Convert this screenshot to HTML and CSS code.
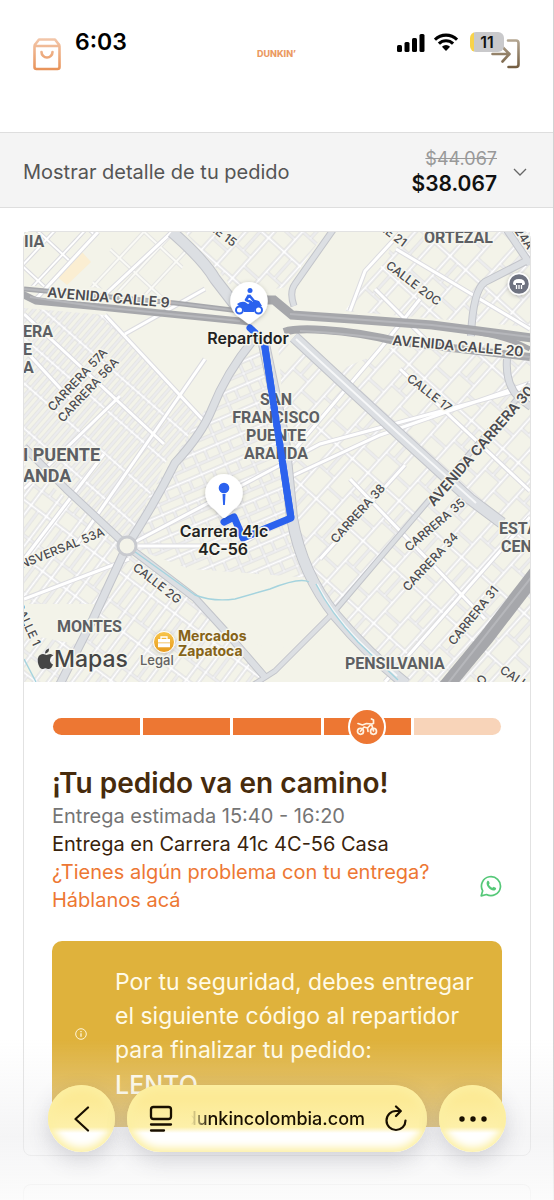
FILE: index.html
```html
<!DOCTYPE html>
<html lang="es">
<head>
<meta charset="utf-8">
<meta name="viewport" content="width=device-width, initial-scale=1">
<title>Dunkin' Colombia</title>
<link rel="stylesheet" href="styles.css">
</head>
<body>
<div class="status">
  <span class="status-time">6:03</span>
  <span class="status-icons">
    <svg width="28" height="19" viewBox="0 0 28 19" aria-hidden="true"><rect x="0" y="12" width="5" height="7" rx="1.5"/><rect x="7.500" y="9" width="5" height="10" rx="1.5"/><rect x="15" y="5" width="5" height="14" rx="1.5"/><rect x="22.500" y="1" width="5" height="18" rx="1.5"/></svg>
    <svg width="24" height="19" viewBox="0 0 26 19" aria-hidden="true"><path d="M1 6.500a17 17 0 0 1 24 0M5.300 10.800a11 11 0 0 1 15.400 0" fill="none" stroke="#000" stroke-width="3.400"/><path d="M8.600 14a6.500 6.500 0 0 1 8.800 0L13 18.600z"/></svg>
    <span class="battery">11</span>
  </span>
</div>

<div class="page">
  <header class="header">
    <button class="icon-button" aria-label="Bolsa"><svg width="30" height="34" viewBox="0 0 30 34" fill="none" stroke="url(#bag)" stroke-width="2.600" stroke-linejoin="round" stroke-linecap="round"><defs><linearGradient id="bag" x1="0" y1="0" x2="0" y2="34" gradientUnits="userSpaceOnUse"><stop stop-color="#f3c9ae"/><stop offset="1" stop-color="#e89156"/></linearGradient></defs><path d="M2.500 9.500Q2.500 8 3.500 7L7 2.500h16L26.500 7q1 1 1 2.500V30a2 2 0 0 1-2 2h-21a2 2 0 0 1-2-2zM3 9h24M9.500 15a5.500 5.500 0 0 0 11 0"/></svg></button>
    <a class="brand" href="#">DUNKIN’</a>
    <button class="icon-button" aria-label="Ingresar"><svg width="38" height="32" viewBox="0 0 38 32" fill="none" stroke="url(#door)" stroke-width="2.600" stroke-linecap="round" stroke-linejoin="round"><defs><linearGradient id="door" x1="0" y1="0" x2="0" y2="32" gradientUnits="userSpaceOnUse"><stop stop-color="#b9ac98"/><stop offset="1" stop-color="#6e573a"/></linearGradient></defs><path d="M25 2.500h8a2.500 2.500 0 0 1 2.500 2.500v21.500a2.500 2.500 0 0 1-2.500 2.500h-7.500M9.500 16H26M19.500 9l7 7-7 7.500"/></svg></button>
  </header>

  <button class="summary">
    <span class="summary-label">Mostrar detalle de tu pedido</span>
    <span class="summary-price"><s>$44.067</s><strong>$38.067</strong></span>
    <svg class="chevron" width="14" height="8" viewBox="0 0 14 8" fill="none" stroke="#666" stroke-width="1.300"><path d="m1 1 6 6 6-6"/></svg>
  </button>

  <main class="main">
    <section class="card">
      <svg class="map" viewBox="24 233 506 450" preserveAspectRatio="xMidYMid slice" role="img" aria-label="Mapa del recorrido">
        <defs>
          <pattern id="p-large" width="22" height="36" patternUnits="userSpaceOnUse" patternTransform="rotate(43)"><rect width="22" height="36" fill="#fff"/><rect class="block" x="1.500" y="1.500" width="19" height="33"/></pattern>
          <pattern id="p-narrow" width="34" height="21" patternUnits="userSpaceOnUse" patternTransform="translate(3 5) rotate(-49)"><rect width="34" height="21" fill="#fff"/><rect class="block" x="1" y="1" width="31" height="5"/><rect class="block" x="1" y="8" width="31" height="5"/><rect class="block" x="1" y="15" width="31" height="5"/></pattern>
          <pattern id="p-mid" width="26" height="22" patternUnits="userSpaceOnUse" patternTransform="rotate(-23)"><rect width="26" height="22" fill="#fff"/><rect class="block" x="1" y="1" width="24" height="8"/><rect class="block" x="1" y="12" width="10" height="9"/><rect class="block" x="13" y="12" width="12" height="9"/></pattern>
          <pattern id="p-south" width="46" height="30" patternUnits="userSpaceOnUse" patternTransform="rotate(-53)"><rect width="46" height="30" fill="#fff"/><rect class="block" x="1" y="1" width="26" height="7"/><rect class="block" x="1" y="10" width="26" height="7"/><rect class="block" x="1" y="20" width="26" height="8"/><rect class="block" x="30" y="1" width="15" height="16"/><rect class="block" x="30" y="20" width="15" height="8"/></pattern>
          <pattern id="p-east" width="54" height="42" patternUnits="userSpaceOnUse" patternTransform="translate(4 0) rotate(-48)"><rect width="54" height="42" fill="#fff"/><rect class="block" x="1" y="1" width="25" height="18"/><rect class="block" x="28" y="1" width="24" height="8"/><rect class="block" x="28" y="11" width="24" height="8"/><rect class="block" x="1" y="22" width="14" height="18"/><rect class="block" x="17" y="22" width="35" height="18"/></pattern>
          <path id="streets" d="m24 315 140 130M105 316 204 422M98 233 36 300M205 360 75 548M24 490 120 397M24 560l80-105M24 600l105-40M127 547l110 0 55-30M127 547 320 445 530 388M295 450l85-100 40-50M290 478l90-42 150-52M350 312l15-40 35-38M396 250l134 80M375 290l60 60M385 683l145-165M320 560l85-94M350 480 485 620M400 370 530 492M24 350 70 400M172 233 95 305M205 290 125 335"/>
          <linearGradient id="gold" x1="0" y1="0" x2="0" y2="1"><stop stop-color="#f8c64c"/><stop offset="1" stop-color="#e79a1c"/></linearGradient>
          <filter id="soft" x="-40%" y="-40%" width="180%" height="180%"><feDropShadow dx="0" dy="1" stdDeviation="2" flood-opacity=".25"/></filter>
        </defs>
        <rect x="24" y="233" width="506" height="450" fill="#f3f3e9"/>
        <path d="M24 233H99L55 289 24 286z" fill="url(#p-large)"/>
        <path d="M120 233h50l20 20-22 45-78-10z" fill="url(#p-large)" opacity=".6"/>
        <path d="M185 233h140l-38 55-48 8z" fill="url(#p-east)"/>
        <path d="M395 233H530V328L345 312 360 290 386 262z" fill="url(#p-east)"/>
        <path d="M24 309 105 316 204 422 165 464 127 547 24 455z" fill="url(#p-narrow)"/>
        <path d="M222 385 258 345 285 430 292 520 312 579 190 570 127 547 150 495z" fill="url(#p-mid)"/>
        <path d="M24 465 127 547 60 683H24z" fill="url(#p-south)"/>
        <path d="M127 547 195 598 265 683H60z" fill="url(#p-south)"/>
        <path d="M278 345H530V683H405L335 615 305 565 292 520z" fill="url(#p-east)"/>
        <path d="M310 345 400 345 330 375zM201 602 300 583 330 620 300 650 250 645zM24 605h74l-22 40-52-10z" fill="#f3f3e9"/>
        <path d="m55 276 27-23 9 10-24 23z" fill="#fbeed2"/>
        <use href="#streets" class="street-edge"/>
        <use href="#streets" class="street-fill"/>
        <g fill="none" stroke="#c2c4ca" stroke-width="10" stroke-linejoin="round">
          <path d="M172 233q32 28 43 47l24 31" stroke-width="12"/><path d="M254 340q-28 34-42 70-10 25-37 54-20 40-48 83L93 620 60 685" stroke-width="9"/>
          <path d="m24 448 42 42 61 57 68 52 31 34 39 45" stroke-width="8"/><path d="m333 231-38 54q-6 8-1 22" stroke-width="7"/>
          <path d="m294 338 56 52 50 46 70 64 32 24" stroke-width="12"/><path d="m264 345 20 95 8 79q10 56 44 98 33 39 70 68" stroke-width="12"/>
          <path d="m507 231 23 34M530 260l-45 23q-12 8-14 54M507 360q-2 25 12 39l12 9" stroke-width="8"/><path d="m530 385-100 115-97 114-58 58-25 16" stroke-width="6"/>
        </g>
        <g fill="none" stroke="#dcdfe3" stroke-width="8" stroke-linejoin="round">
          <path d="M172 233q32 28 43 47l24 31" stroke-width="10"/><path d="M254 340q-28 34-42 70-10 25-37 54-20 40-48 83L93 620 60 685" stroke-width="7"/>
          <path d="m24 448 42 42 61 57 68 52 31 34 39 45" stroke-width="6"/><path d="m333 231-38 54q-6 8-1 22" stroke-width="5"/>
          <path d="m294 338 56 52 50 46 70 64 32 24" stroke-width="10"/><path d="m264 345 20 95 8 79q10 56 44 98 33 39 70 68" stroke-width="10"/>
          <path d="m507 231 23 34M530 260l-45 23q-12 8-14 54M507 360q-2 25 12 39l12 9" stroke-width="6"/><path d="m530 385-100 115-97 114-58 58-25 16" stroke-width="4"/>
        </g>
        <path d="m296 340 100 92 80 72M317 585q18 35 50 65l30 27" fill="none" stroke="#f6f7f8" stroke-width="2"/>
        <path d="M127 547l68 49q18 7 40 4l35-10q30-12 39-7M316 585q14 28 42 58l40 38M24 660l12 23" fill="none" stroke="#a4d3de" stroke-width="1.400"/>
        <circle cx="127" cy="547" r="9" fill="#f3f3e9" stroke="#c8cacf" stroke-width="3"/>
        <g fill="none" stroke="#a6a7ab" stroke-width="7">
          <path d="M24 290 100 297 175 304 240 312" stroke-width="5"/><path d="m22 295 14 7 64 6 150 15" stroke-width="7"/>
          <path d="M258 301h16l18 15 60 4 80 6 100 13" stroke-width="9"/><path d="M284 333q12-4 40-2 35 2 76 12l130 15" stroke-width="8"/>
          <path d="M480 334q30 5 50 16" stroke-width="5"/><path d="m536 574-50 65-43 52" stroke-width="15"/>
        </g>
        <g fill="none" stroke="#b6b7bb" stroke-width="2"><path d="m24 290 76 7 75 7 65 8M30 298l70 10 140 14M290 315l62 5 80 6 98 12M300 332q60 3 100 11l130 15M533 576 445 688"/></g>
        <path d="m250 329 14 13 27 177-48 20-9-21-10 5" fill="none" stroke="#2b62ee" stroke-width="7" stroke-linejoin="round" stroke-linecap="round"/>

        <g class="street">
          <text transform="translate(47 298) rotate(5)">AVENIDA CALLE 9</text>
          <text transform="translate(392 346) rotate(5)">AVENIDA CALLE 20</text>
          <text transform="translate(434 508) rotate(-49)">AVENIDA CARRERA 30</text>
        </g>
        <g class="street small">
          <text transform="translate(190 216) rotate(37)">CALLE 15</text>
          <text transform="translate(360 216) rotate(37)">CALLE 21</text>
          <text transform="translate(514 232) rotate(55)">24A</text>
          <text transform="translate(385 268) rotate(37)">CALLE 20C</text>
          <text transform="translate(406 381) rotate(38)">CALLE 17</text>
          <text transform="translate(53 413) rotate(-47)">CARRERA 57A</text>
          <text transform="translate(63 424) rotate(-47)">CARRERA 56A</text>
          <text transform="translate(336 545) rotate(-48)">CARRERA 38</text>
          <text transform="translate(409 553) rotate(-40)">CARRERA 35</text>
          <text transform="translate(408 593) rotate(-47)">CARRERA 34</text>
          <text transform="translate(454 647) rotate(-51)">CARRERA 31</text>
          <text transform="translate(14 573) rotate(-22)">ANSVERSAL 53A</text>
          <text transform="translate(132 570) rotate(38)">CALLE 2G</text>
          <text transform="translate(14 606) rotate(65)">CALLE 1</text>
          <text transform="translate(499 673) rotate(34)">CALLE 12</text>
          <text transform="translate(482 687) rotate(-50)">O</text>
        </g>
        <g class="place">
          <text x="24" y="248">IIA</text><text x="424" y="244">ORTEZAL</text>
          <text x="23" y="338">ERA</text><text x="23" y="356">E</text><text x="23" y="374">A</text>
          <g class="wide"><text x="23" y="462">I PUENTE</text><text x="23" y="483">ANDA</text></g>
          <text text-anchor="middle" x="276" y="406">SAN</text><text text-anchor="middle" x="276" y="424">FRANCISCO</text><text text-anchor="middle" x="276" y="442">PUENTE</text><text text-anchor="middle" x="276" y="460">ARANDA</text>
          <text x="57" y="633">MONTES</text><text x="345" y="670">PENSILVANIA</text>
          <text x="499" y="535">ESTACIÓN</text><text x="501" y="553">CENTRAL</text>
        </g>
        <path d="M264 342 291 519" stroke="#2b62ee" stroke-width="7"/>
        <g filter="url(#soft)" fill="#fff"><path d="M249 283a19 19 0 0 1 10 35l-8 6q-2 2-4 0l-8-6a19 19 0 0 1 10-35z"/><path d="M224 475a19 19 0 0 1 10 35l-8 8q-2 2-4 0l-8-8a19 19 0 0 1 10-35z"/></g>
        <circle cx="224" cy="489" r="5.300" fill="#2b62ee"/><path d="M222.500 495h3l-.6 11h-1.800z" fill="#2b62ee"/>
        <g fill="none" stroke="#2b62ee"><circle cx="239.500" cy="311" r="3.500" stroke-width="2"/><circle cx="258.500" cy="311" r="3.500" stroke-width="2"/></g>
        <path d="M237 305q4-3 8-2l3 2 6-3h5l3 5h-4q-3 1-4 6h-10q-1-5-5-6z" fill="#2b62ee"/><path d="m249 296-3 5 5 2-1 4M249 296l5 6 4 1" fill="none" stroke="#2b62ee" stroke-width="2.600" stroke-linejoin="round"/><circle cx="250" cy="291.500" r="2.500" fill="#2b62ee"/>
        <g class="pin-label" text-anchor="middle"><text x="248" y="345">Repartidor</text><text x="224" y="538">Carrera 41c</text><text x="223" y="556">4C-56</text></g>
        <circle cx="519" cy="285" r="10.500" fill="#6e7280" stroke="#fff" stroke-width="1.500" filter="url(#soft)"/><path d="M513 285q0-5 6-5t6 5l-1 1h-2v-2h-6v2h-2z" fill="#fff"/><path d="M516.500 290v-4M519 290v-4M521.500 290v-4" stroke="#fff" stroke-width="1.300"/>
        <circle cx="164" cy="643" r="10.500" fill="url(#gold)" stroke="#fff" filter="url(#soft)"/><path d="M158 640h12v3.500h-12zM158 644.300h12v4h-12z" fill="#fff"/><path d="M161 640v-2h6v2" fill="none" stroke="#fff" stroke-width="1.300"/>
        <g class="shop"><text x="178" y="642">Mercados</text><text x="178" y="657">Zapatoca</text></g>
        <path d="M52 657q-2 1.500-2 4 0 3 3 4.500-1.500 4-4 4.500c-1.500.2-2-.8-3.500-.8s-2 .9-3.500.8c-3-.5-5-7-4-11 .8-3 3-4 5-4 1.500 0 2.500 1 3.500 1s2-1 4-1q1.500.2 3 2zM49 649.500q.2 4.500-4 5 0-4 4-5z" fill="#454545"/>
        <text class="map-brand" x="54" y="668">Mapas</text>
        <text class="legal" x="140" y="666">Legal</text>
      </svg>

      <div class="body">
        <div class="progress" role="progressbar" aria-valuenow="4" aria-valuemin="0" aria-valuemax="5" aria-label="Progreso del pedido">
          <span class="step"></span><span class="step"></span><span class="step"></span>
          <span class="step"><span class="rider"><svg width="22" height="18" viewBox="0 0 22 18" fill="none" stroke="#fff2e0" stroke-width="1.700" stroke-linecap="round" stroke-linejoin="round"><circle cx="4.500" cy="13.300" r="3"/><circle cx="17.500" cy="13.300" r="3"/><path d="m2 5.500 4.500 1.500 4-1.500 5 .5-4 4 .5 3.500M4.500 13.300 8 9l3.500 1M15.500 6l2-.5V2L15.500 1M15.500 6l2 7"/></svg></span></span>
          <span class="step pending"></span>
        </div>
        <h1 class="title">¡Tu pedido va en camino!</h1>
        <p class="eta">Entrega estimada 15:40 - 16:20</p>
        <p class="address">Entrega en Carrera 41c 4C-56 Casa</p>
        <a class="help" href="#">
          <span>¿Tienes algún problema con tu entrega? Háblanos acá</span>
          <svg width="22" height="22" viewBox="0 0 22 22" aria-hidden="true"><path d="M1.200 20.800 2.700 15.800A9.500 9.500 0 1 1 6.500 19.500z" fill="none" stroke="#55c878" stroke-width="1.700" stroke-linejoin="round"/><path d="M7.500 5.800c.8-.4 1.200 0 1.500.8l.6 1.500c.2.600-.8 1.200-.6 1.700.8 1.500 1.800 2.400 3.300 3 .5.200 1.100-1.200 1.700-.9l1.700.8c.8.500.3 1.800-.4 2.400-3.600 2.500-11.400-5-7.800-9.300z" fill="#55c878"/></svg>
        </a>
        <div class="notice">
          <svg width="12" height="12" viewBox="0 0 12 12" fill="none" stroke="#fff6da"><circle cx="6" cy="6" r="5.300"/><path d="M6 5.200v3.500M6 3v1.200" stroke-width="1.300"/></svg>
          <p>Por tu seguridad, debes entregar el siguiente código al repartidor para finalizar tu pedido: <strong>LENTO</strong></p>
        </div>
      </div>
    </section>
    <section class="card next" aria-hidden="true"></section>
  </main>
</div>

<nav class="browser" aria-label="Navegador">
  <button class="glass round" aria-label="Atrás"><svg width="16" height="26" viewBox="0 0 16 26" fill="none" stroke="#180f00" stroke-width="2.200" stroke-linecap="round" stroke-linejoin="round"><path d="M13 1.500.500 13 13 24.500" transform="translate(1)"/></svg></button>
  <div class="glass address-bar">
    <button class="bare" aria-label="Menú de página"><svg width="24" height="27" viewBox="0 0 24 27" fill="none" stroke="#180f00" stroke-width="2.300" stroke-linecap="round"><rect x="2" y="2" width="20" height="12" rx="2.500"/><path d="M2 19.500h20M2 25.500h13"/></svg></button>
    <button class="bare domain"><span>dunkincolombia.com</span></button>
    <button class="bare" aria-label="Recargar"><svg width="22" height="27" viewBox="0 0 22 27" fill="none" stroke="#180f00" stroke-width="2.200" stroke-linecap="round" stroke-linejoin="round"><path d="M20.500 15.500A9.500 9.500 0 1 1 11 6h4.500M11 1.500 15.800 6 11 11"/></svg></button>
  </div>
  <button class="glass round" aria-label="Más"><svg width="28" height="6" viewBox="0 0 28 6" fill="#180f00"><circle cx="3" cy="3" r="2.700"/><circle cx="14" cy="3" r="2.700"/><circle cx="25" cy="3" r="2.700"/></svg></button>
</nav>
</body>
</html>
```
FILE: styles.css
```css
* { box-sizing: border-box; }
body { margin: 0; background: #fff; color: #222; font-family: Inter, "Open Sans", sans-serif; font-size: 20px; }
button { font: inherit; color: inherit; background: none; border: 0; padding: 0; margin: 0; }
p, h1 { margin: 0; }
svg { display: block; }

.status { position: absolute; z-index: 2; top: 28px; left: 75px; right: 50px; display: flex; align-items: center; justify-content: space-between; pointer-events: none; }
.status-time { font: 600 23px/28px Inter, sans-serif; color: #000; }
.status-icons { display: flex; align-items: center; gap: 9px; }
.battery { width: 34px; margin-left: 3px; border-radius: 6px; background: linear-gradient(90deg, #f8d34a 4px, #c9c9cb 4px); font: 600 16px/20px Inter, sans-serif; text-align: center; color: #111; }

.page { display: flex; flex-direction: column; min-height: 100vh; border-right: 1px solid #d2d2d2; }
.header { display: flex; align-items: center; justify-content: space-between; height: 132px; padding: 0 32px 25px; }
.icon-button { flex: 1; display: flex; }
.icon-button:last-child { justify-content: flex-end; }
.brand { font: 800 9px/12px Inter, sans-serif; color: #eb9a63; text-decoration: none; }

.summary { display: flex; align-items: center; border: solid #dedede; border-width: 1px 0; background: #f4f4f4; padding: 14px 26px 10px 23px; text-align: left; }
.summary-label { flex: 1; color: #555; }
.summary-price { display: flex; flex-direction: column; align-items: flex-end; font-size: 18px; line-height: 26px; }
.summary-price s { color: #999; line-height: 24px; }
.summary-price strong { color: #111; font-size: 21px; font-weight: 600; line-height: 26px; }
.chevron { margin-left: 16px; }

.main { flex: 1; display: flex; flex-direction: column; gap: 28px; padding: 23px 22px 0 23px; }
.card { border: 1px solid #e2e2e2; border-radius: 8px; }
.card.next { flex: 1; border-bottom: 0; border-radius: 8px 8px 0 0; }
.map { width: 100%; }
.block { fill: #f3f3e9; stroke: #dadade; stroke-width: 1; }
.street-edge { fill: none; stroke: #dcdce0; stroke-width: 5; }
.street-fill { fill: none; stroke: #fff; stroke-width: 3; }
.map text { paint-order: stroke; stroke: #f6f6ee; stroke-width: 3px; stroke-linejoin: round; font-family: Inter, sans-serif; }
.street text { font-size: 14px; font-weight: 600; fill: #4b4b50; }
.street.small text { font-size: 12px; font-weight: 500; }
.map .place text { font-family: Roboto, sans-serif; font-size: 16px; font-weight: 700; fill: #5d5f63; }
.map .place .wide text { font-size: 18px; }
.map .pin-label text { font-size: 16px; font-weight: 600; fill: #222; }
.map .shop text { font-size: 14px; font-weight: 700; fill: #866318; }
.map .map-brand { font-size: 23px; font-weight: 500; fill: #454545; }
.map .legal { font-size: 13px; font-weight: 500; fill: #626262; }

.body { padding: 36px 28px 28px; }
.progress { display: flex; gap: 3px; margin: 0 1px 30px; }
.step { position: relative; flex: 1; height: 17px; background: #ed7733; }
.step:first-child { border-radius: 9px 0 0 9px; }
.step:last-child { border-radius: 0 9px 9px 0; }
.step.pending { background: #f8d4b9; }
.rider { position: absolute; top: 50%; left: 50%; transform: translate(-50%, -50%); display: grid; place-items: center; width: 38px; height: 38px; border: 2px solid #fff; border-radius: 50%; background: #ed7733; }
.title { margin-bottom: 1px; color: #472b0c; font-size: 28px; line-height: 36px; font-weight: 600; }
.eta, .address, .help { line-height: 28px; }
.eta { color: #757575; }
.address { color: #39230c; }
.help { display: flex; align-items: center; justify-content: space-between; color: #ed7733; text-decoration: none; }
.help span { max-width: 400px; }
.notice { display: flex; align-items: center; gap: 28px; margin-top: 27px; padding: 24px 23px; border-radius: 10px; background: #dfb23c; color: #fffbe8; font-size: 23px; line-height: 34px; }
.notice svg { flex: none; }
.notice strong { display: block; font-size: 25px; line-height: 36px; font-weight: 500; }

.browser { position: fixed; z-index: 3; bottom: 0; left: 0; right: 0; display: flex; gap: 12px; padding: 45px 48px 48px; background: linear-gradient(rgba(235, 235, 237, 0), rgba(235, 235, 237, .5) 60%, rgba(251, 251, 251, .85)); }
.glass { height: 67px; border-radius: 34px; background: linear-gradient(#fcea96 15px, #fdf0a9 42px, #fff 48px); box-shadow: inset 0 0 9px 4px #fcefa2, 0 8px 22px rgba(60, 60, 80, .2); }
.round { flex: none; display: grid; place-items: center; width: 67px; }
.address-bar { flex: 1; min-width: 0; display: flex; align-items: center; padding: 0 20px 0 22px; }
.bare { flex: none; }
.domain { flex: 1; min-width: 0; display: flex; justify-content: flex-end; overflow: hidden; margin: 0 20px 0 18px; font: 500 18px/24px Inter, sans-serif; color: #180f00; mask-image: linear-gradient(90deg, transparent, #000 18px); }
```
